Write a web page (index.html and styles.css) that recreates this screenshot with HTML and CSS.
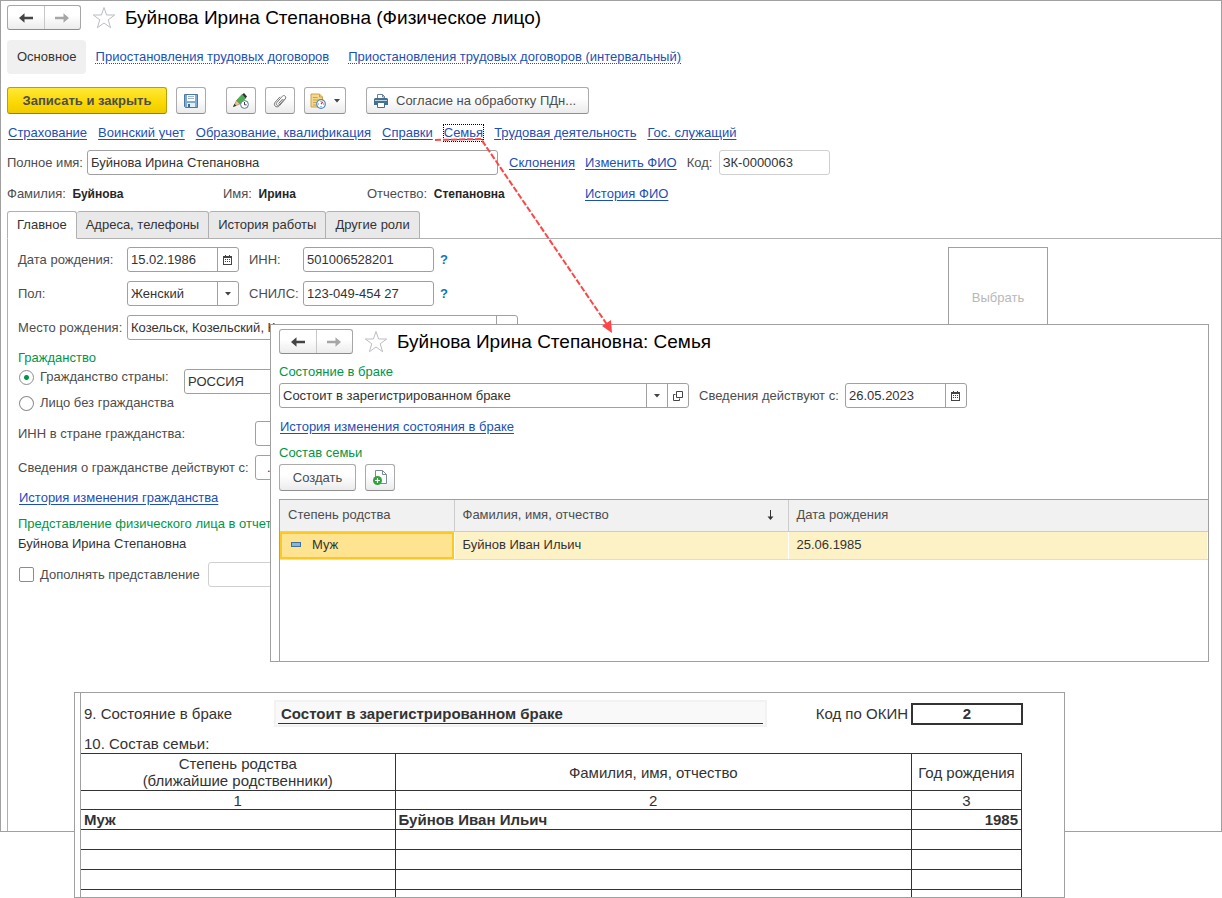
FILE: index.html
```html
<!DOCTYPE html>
<html lang="ru">
<head>
<meta charset="utf-8">
<title>Буйнова Ирина Степановна (Физическое лицо)</title>
<link rel="stylesheet" href="styles.css">
</head>
<body>
<svg class="defs" aria-hidden="true">
  <symbol id="i-back" viewBox="0 0 14 10"><path d="M0 5 5.500 0.300V3.700H14V6.300H5.500V9.700Z" fill="currentColor"/></symbol>
  <symbol id="i-fwd" viewBox="0 0 14 10"><path d="M14 5 8.500 0.300V3.700H0V6.300H8.500V9.700Z" fill="currentColor"/></symbol>
  <symbol id="i-star" viewBox="0 0 24 24"><path d="M12 1.500 14.600 9H22.700L16.200 13.800 18.600 21.700 12 17 5.400 21.700 7.800 13.800 1.300 9H9.400Z" fill="#fff" stroke="#b9bdc4"/></symbol>
  <symbol id="i-cal" viewBox="0 0 10 10"><g shape-rendering="crispEdges"><path d="M0 1H2V0H3V1H6V0H7V1H9V10H0Z" fill="#444"/><path d="M1 3H8V9H1Z" fill="#fff"/><path d="M2 4H3V5H2ZM4 4H5V5H4ZM6 4H7V5H6ZM2 6H3V7H2ZM4 6H5V7H4ZM6 6H7V7H6Z" fill="#444"/></g></symbol>
  <symbol id="i-down" viewBox="0 0 6 4"><path d="M0 0H6L3 3.500Z" fill="#444"/></symbol>
  <symbol id="i-open" viewBox="0 0 10 10"><path d="M3.500 0.500H9.500V6.500H3.500ZM2.500 3.500H0.500V9.500H6.500V7.500" fill="none" stroke="#444"/></symbol>
</svg>

<main class="desktop">
  <section class="window person">
    <header class="titlebar">
      <div class="history">
        <button type="button" aria-label="Назад"><svg><use href="#i-back"/></svg></button>
        <button type="button" class="off" aria-label="Вперед"><svg><use href="#i-fwd"/></svg></button>
      </div>
      <svg class="star"><use href="#i-star"/></svg>
      <h1>Буйнова Ирина Степановна (Физическое лицо)</h1>
    </header>

    <nav class="sections">
      <span class="current">Основное</span>
      <a href="#">Приостановления трудовых договоров</a>
      <a href="#">Приостановления трудовых договоров (интервальный)</a>
    </nav>

    <div class="toolbar">
      <button type="button" class="btn primary">Записать и закрыть</button>
      <button type="button" class="btn icon save" aria-label="Записать">
        <svg viewBox="0 0 16 16"><path d="M1.500 1.500H14.500V14.500H2.500L1.500 13.500Z" fill="#7fabd2" stroke="#4a78a3"/><path d="M4 2H12V8H4Z" fill="#fff"/><path d="M5 3.500H11M5 5.500H11" stroke="#9db6cc"/><path d="M4 10H12V14H4Z" fill="#e3edf5"/><path d="M5 11H7V14H5Z" fill="#3f6c97"/></svg>
      </button>
      <button type="button" class="btn icon" aria-label="Правка">
        <svg viewBox="0 0 16 16"><path d="M9 1.500 11 0 14 3.500 12.500 5.500Z" fill="#333"/><path d="M3.500 7.500 9 1.500 12.500 5.200 7 11Z" fill="#4caf50" stroke="#2f8a3a" stroke-width=".6"/><path d="M3.500 7.500 7 11 0.500 13.500Z" fill="#e8c48c" stroke="#8a6a3a" stroke-width=".5"/><path d="M0 14 1.500 10.800 3.300 12.700Z" fill="#333"/><circle cx="11.500" cy="11.500" r="3.900" fill="#fff" stroke="#56748f"/><path d="M11.500 9V11.800H13.500" fill="none" stroke="#345"/></svg>
      </button>
      <button type="button" class="btn icon" aria-label="Файлы">
        <svg viewBox="0 0 16 16"><path d="M12.500 6 7 12C5.500 13.300 3.300 11.300 4.700 9.700L10.300 3.300C12.100 1.300 15 3.800 13.200 6L7.500 12.700C4.800 15.800 0.600 12.300 3.200 9.200L8 3.800M10.700 6 6.500 10.600" fill="none" stroke="#777"/></svg>
      </button>
      <button type="button" class="btn icon split" aria-label="Отчеты">
        <svg viewBox="0 0 16 16"><path d="M1 1H9.500L12.500 4V14H1Z" fill="#f5d98b" stroke="#c9a24d"/><path d="M9.500 1V4H12.500M3 4.500H7.500M3 7H9M3 9.500H6.500M3 12H6" fill="none" stroke="#c9a24d"/><circle cx="11" cy="11" r="4.300" fill="#fff" stroke="#4b86b8" stroke-width="1.200"/><path d="M11 8V9M11 13V14M8 11H9M13 11H14" stroke="#4b86b8"/><path d="M11 11 12.800 8.800" stroke="#d33" stroke-width="1.200"/></svg>
        <svg class="caret"><use href="#i-down"/></svg>
      </button>
      <button type="button" class="btn print">
        <svg viewBox="0 0 16 16"><path d="M4.500 6V1.500H9.500L11.500 3.500V6" fill="#fff" stroke="#6b8299"/><path d="M9.500 1.500V4H12" fill="none" stroke="#6b8299"/><path d="M2 5H14L15 6V12H1V6Z" fill="#44708f"/><path d="M2 7.500H14" stroke="#bcd0df"/><path d="M4.500 9.500H11.500V14.500H4.500Z" fill="#fff" stroke="#44708f"/></svg>
        Согласие на обработку ПДн...
      </button>
    </div>

    <nav class="links">
      <a href="#">Страхование</a>
      <a href="#">Воинский учет</a>
      <a href="#">Образование, квалификация</a>
      <a href="#">Справки</a>
      <a href="#" class="focus">Семья</a>
      <a href="#">Трудовая деятельность</a>
      <a href="#">Гос. служащий</a>
    </nav>

    <div class="idrow">
      <label for="full">Полное имя:</label>
      <input class="box" id="full" value="Буйнова Ирина Степановна">
      <a href="#">Склонения</a>
      <a href="#">Изменить ФИО</a>
      <label for="code">Код:</label>
      <input class="box pale" id="code" value="ЗК-0000063">
    </div>

    <div class="names">
      <span>Фамилия: <b>Буйнова</b></span>
      <span>Имя: <b>Ирина</b></span>
      <span>Отчество: <b>Степановна</b></span>
      <a href="#">История ФИО</a>
    </div>

    <div class="tabs" role="tablist">
      <button type="button" role="tab" aria-selected="true">Главное</button>
      <button type="button" role="tab">Адреса, телефоны</button>
      <button type="button" role="tab">История работы</button>
      <button type="button" role="tab">Другие роли</button>
    </div>

    <div class="page">
      <div class="details">
        <div class="line">
          <label for="birth">Дата рождения:</label>
          <div class="box combo short"><input id="birth" value="15.02.1986"><button type="button" aria-label="Календарь"><svg class="cal"><use href="#i-cal"/></svg></button></div>
          <label for="inn" class="second">ИНН:</label>
          <input class="box num" id="inn" value="501006528201">
          <a href="#" class="help">?</a>
        </div>
        <div class="line">
          <label for="sex">Пол:</label>
          <div class="box combo short"><select id="sex"><option>Женский</option></select><span class="cell"><svg class="caret"><use href="#i-down"/></svg></span></div>
          <label for="snils" class="second">СНИЛС:</label>
          <input class="box num" id="snils" value="123-049-454 27">
          <a href="#" class="help">?</a>
        </div>
        <div class="line">
          <label for="place">Место рождения:</label>
          <div class="box combo long"><input id="place" value="Козельск, Козельский, К"><button type="button" aria-label="Открыть"></button></div>
        </div>

        <h2>Гражданство</h2>
        <div class="citizen">
          <div class="choices">
            <label><input type="radio" name="cit" checked>Гражданство страны:</label>
            <label><input type="radio" name="cit">Лицо без гражданства</label>
          </div>
          <input class="box" aria-label="Страна" value="РОССИЯ">
        </div>
        <div class="line wide">
          <label for="finn">ИНН в стране гражданства:</label>
          <input class="box" id="finn">
        </div>
        <div class="line wide">
          <label for="since">Сведения о гражданстве действуют с:</label>
          <input class="box" id="since" value=".  .">
        </div>
        <a href="#" class="hist">История изменения гражданства</a>
        <h2>Представление физического лица в отчетах</h2>
        <p class="repr">Буйнова Ирина Степановна</p>
        <div class="extra">
          <label><input type="checkbox">Дополнять представление</label>
          <input class="box pale" aria-label="Дополнение представления">
        </div>
      </div>
      <button type="button" class="photo">Выбрать</button>
    </div>
  </section>

  <section class="window family">
    <header class="titlebar">
      <div class="history">
        <button type="button" aria-label="Назад"><svg><use href="#i-back"/></svg></button>
        <button type="button" class="off" aria-label="Вперед"><svg><use href="#i-fwd"/></svg></button>
      </div>
      <svg class="star"><use href="#i-star"/></svg>
      <h1>Буйнова Ирина Степановна: Семья</h1>
    </header>
    <h2>Состояние в браке</h2>
    <div class="marital">
      <div class="box combo state"><select aria-label="Состояние в браке"><option>Состоит в зарегистрированном браке</option></select><span class="cell"><svg class="caret"><use href="#i-down"/></svg></span><button type="button" aria-label="Открыть"><svg class="cal"><use href="#i-open"/></svg></button></div>
      <label for="valid">Сведения действуют с:</label>
      <div class="box combo valid"><input id="valid" value="26.05.2023"><button type="button" aria-label="Календарь"><svg class="cal"><use href="#i-cal"/></svg></button></div>
    </div>
    <a href="#" class="hist">История изменения состояния в браке</a>
    <h2>Состав семьи</h2>
    <div class="actions">
      <button type="button" class="btn create">Создать</button>
      <button type="button" class="btn icon" aria-label="Скопировать">
        <svg viewBox="0 0 16 16"><path d="M3.500 0.500H10.500L14.500 4.500V13.500H3.500Z" fill="#fff" stroke="#7d8c9c"/><path d="M10.500 0.500V4.500H14.500" fill="none" stroke="#7d8c9c"/><circle cx="5.500" cy="10.500" r="4.500" fill="#2fa33c"/><path d="M5.500 8V13M3 10.500H8" stroke="#fff" stroke-width="1.200"/></svg>
      </button>
    </div>
    <div class="gridwrap">
      <table class="members">
        <colgroup><col class="c1"><col class="c2"><col></colgroup>
        <thead><tr><th>Степень родства</th><th><span class="sorted">Фамилия, имя, отчество<svg viewBox="0 0 8 12"><path d="M4.500 1V9" stroke="#333"/><path d="M1.500 7.500H7.500L4.500 11Z" fill="#333"/></svg></span></th><th>Дата рождения</th></tr></thead>
        <tbody><tr><td class="picked"><i class="mark"></i>Муж</td><td>Буйнов Иван Ильич</td><td>25.06.1985</td></tr></tbody>
      </table>
    </div>
  </section>

  <section class="window report">
    <div class="sheet">
      <div class="item9">
        <span class="caption">9. Состояние в браке</span>
        <div class="status"><b>Состоит в зарегистрированном браке</b></div>
        <span class="okin">Код по ОКИН</span>
        <b class="okinbox">2</b>
      </div>
      <p class="item10">10. Состав семьи:</p>
      <table class="form">
        <colgroup><col class="r1"><col><col class="r3"></colgroup>
        <thead>
          <tr class="head"><th>Степень родства<br>(ближайшие родственники)</th><th>Фамилия, имя, отчество</th><th>Год рождения</th></tr>
          <tr class="nums"><th>1</th><th>2</th><th>3</th></tr>
        </thead>
        <tbody>
          <tr><td>Муж</td><td>Буйнов Иван Ильич</td><td class="year">1985</td></tr>
          <tr><td></td><td></td><td></td></tr>
          <tr><td></td><td></td><td></td></tr>
          <tr><td></td><td></td><td></td></tr>
          <tr><td></td><td></td><td></td></tr>
        </tbody>
      </table>
    </div>
  </section>

  <svg class="pointer" viewBox="0 0 180 196" aria-hidden="true">
    <path d="M0 4 46 3 173 190" fill="none" stroke="#ff4646" stroke-width="2" stroke-dasharray="6 2"/>
    <path d="M167 190 176 184 177 197Z" fill="#ff4646"/>
  </svg>
</main>
</body>
</html>
```
FILE: styles.css
```css
* { box-sizing: border-box; }
body {
  margin: 0;
  background: #fff;
  color: #333;
  font: 13px/16px "Liberation Sans", Arial, sans-serif;
}
h1, h2, p { margin: 0; font-weight: normal; }
h1 { font-size: 19px; line-height: 24px; color: #000; }
h2 { font-size: 13px; color: #009646; }
a { color: #1d4fb5; text-underline-offset: 2px; }
button, input, select { font: inherit; color: inherit; margin: 0; }
label { color: #4d4d4d; }
.defs { position: absolute; width: 0; height: 0; }

.desktop { position: relative; height: 898px; overflow: hidden; }
.window { position: absolute; background: #fff; border: 1px solid #a0a0a0; overflow: hidden; white-space: nowrap; }
.person { left: 0; right: 0; top: 0; height: 832px; padding: 4px 0 0 6px; display: flex; flex-direction: column; }
.family { left: 270px; right: 13px; top: 324px; height: 338px; padding: 4px 0 0 8px; display: flex; flex-direction: column; }
.report { left: 74px; right: 157px; top: 692px; height: 206px; padding-left: 5px; }

/* title bars */
.titlebar { display: flex; align-items: center; height: 25px; }
.history { display: flex; height: 25px; width: 74px; border: 1px solid #a6a6a6; border-bottom-color: #8c8c8c; border-radius: 3px; background: linear-gradient(#fff 40%, #ececec); }
.history button { flex: 1; border: 0; padding: 0; background: none; color: #444; display: flex; align-items: center; justify-content: center; }
.history button + button { border-left: 1px solid #c8c8c8; }
.history .off { color: #a6a6a6; }
.history svg { width: 14px; height: 10px; }
.star { width: 24px; height: 24px; margin: 0 9px 0 11px; }

/* section links */
.sections { display: flex; align-items: center; gap: 19px; margin-top: 10px; height: 34px; }
.sections .current { align-self: stretch; display: flex; align-items: center; padding: 0 9px 0 10px; margin-right: -9px; background: #f0f0f0; border-radius: 4px; }
.sections a { text-decoration: underline dotted 1px; }

/* buttons */
.toolbar { display: flex; gap: 9px; margin-top: 13px; }
.btn { height: 27px; padding: 0 10px; border: 1px solid #ababab; border-bottom-color: #8f8f8f; border-radius: 3px; background: linear-gradient(#fff 40%, #ebebeb); color: #4d4d4d; display: flex; align-items: center; justify-content: center; }
.btn svg { width: 16px; height: 16px; flex: none; }
.btn .caret, .caret { width: 6px; height: 4px; }
.btn.primary { width: 160px; padding: 0; font-weight: bold; border-color: #b8a000 #b8a000 #958200; background: linear-gradient(#ffe838, #fbd800 60%, #efcb00); }
.btn.icon { width: 30px; padding: 0; }
.btn.save { margin-right: 11px; }
.btn.split { width: 42px; gap: 8px; margin-right: 11px; }
.btn.print { width: 223px; gap: 7px; padding: 0 6px; justify-content: flex-start; }

.links { display: flex; gap: 11px; margin: 11px 0 0 1px; }
.links .focus { outline: 1px dotted #000; }

/* fields */
.box { height: 25px; border: 1px solid #a0a0a0; border-radius: 3px; background: #fff; padding: 0 3px; min-width: 0; }
.box.pale { border-color: #d0d0d0; }
.combo { display: flex; padding: 0; }
.combo input, .combo select { flex: 1; min-width: 0; border: 0; padding: 0 3px; background: none; appearance: none; outline: 0; }
.combo button, .cell { width: 21px; flex: none; padding: 0; border: 0; border-left: 1px solid #a0a0a0; background: none; display: flex; align-items: center; justify-content: center; }
.cal { width: 10px; height: 10px; }

.idrow { display: flex; align-items: center; margin-top: 9px; }
.idrow label { width: 80px; }
.idrow #full { width: 411px; margin-right: 11px; }
.idrow a { margin-right: 10px; }
.idrow a + label { width: 32px; }
.idrow #code { width: 111px; }
.names { display: grid; grid-template-columns: 216px 144px 218px auto; align-items: center; margin-top: 11px; color: #4d4d4d; }
.names b { margin-left: 3px; font-size: 12px; color: #262626; }

/* tabs */
.tabs { display: flex; margin-top: 9px; box-shadow: inset 0 -1px #b0b0b0; }
.tabs button { height: 28px; padding: 0 9px; border: 1px solid #b0b0b0; border-radius: 3px 3px 0 0; background: #e9e9e9; }
.tabs button + button { border-left: 0; }
.tabs [aria-selected] { background: #fff; border-bottom-color: #fff; }

.page { flex: 1; display: flex; justify-content: space-between; border-left: 1px solid #b0b0b0; padding: 8px 173px 0 10px; }
.details { display: flex; flex-direction: column; align-items: flex-start; }
.line { display: flex; align-items: center; margin-bottom: 9px; }
.line label { width: 109px; }
.line .short { width: 112px; }
.line .second { width: 54px; margin-left: 10px; }
.line .num { width: 131px; }
.line .long { width: 391px; }
.help { margin-left: 6px; color: #0f75bd; text-decoration: none; font-weight: bold; }
.details h2 { margin-top: 1px; }
.citizen { display: flex; gap: 10px; margin: 3px 0 10px; }
.choices { display: flex; flex-direction: column; gap: 10px; width: 156px; }
.choices label, .extra label { display: flex; align-items: center; gap: 6px; margin-left: 1px; height: 16px; }
.citizen .box { width: 200px; }
.wide label { width: 237px; }
.wide .box { width: 120px; padding-left: 11px; }
.details .hist { margin: 1px 0 9px 1px; }
.repr { margin-top: 4px; }
.extra { display: flex; align-items: center; gap: 8px; margin-top: 10px; }
.extra .box { width: 200px; }
input[type=radio], input[type=checkbox] { appearance: none; width: 15px; height: 15px; border: 1px solid #8c8c8c; border-radius: 2px; background: #fff; }
input[type=radio] { border-radius: 50%; }
input[type=radio]:checked { background: radial-gradient(circle, #009646 2px, #fff 3px); }
.photo { width: 100px; height: 102px; border: 1px solid #a0a0a0; background: #fff; color: #b8b8b8; padding: 0; }

/* family window */
.family h2 { margin-top: 10px; }
.marital { display: flex; align-items: center; margin-top: 3px; }
.marital .state { width: 410px; margin-right: 10px; }
.marital label { width: 146px; }
.marital .valid { width: 122px; }
.family .hist { margin: 11px 0 0 1px; align-self: flex-start; }
.actions { display: flex; gap: 9px; margin-top: 3px; }
.btn.create { width: 77px; }
.gridwrap { flex: 1; margin-top: 8px; border: 1px solid #a0a0a0; border-width: 1px 0 0 1px; }
table { border-collapse: collapse; table-layout: fixed; width: 100%; }
.members .c1 { width: 174px; }
.members .c2 { width: 334px; }
.members th { height: 31px; padding: 0 8px; text-align: left; font-weight: normal; color: #4d4d4d; background: #f1f1f1; border-right: 1px solid #ccc; border-bottom: 1px solid #ccc; }
.members th:last-child { border-right: 0; }
.sorted { display: flex; justify-content: space-between; padding-right: 6px; }
.sorted svg { width: 8px; height: 12px; align-self: center; }
.members td { height: 28px; padding: 0 8px; background: #fdf1c6; border-right: 1px solid #fff; border-bottom: 1px solid #ddd; }
.members .picked { background: #fee391; box-shadow: inset 0 0 0 2px #fbc91f; padding-left: 11px; }
.mark { display: inline-block; width: 10px; height: 5px; margin: 0 11px 3px 0; border: 1px solid #41719a; background: #8bb4d4; vertical-align: middle; }

/* printed form */
.sheet { height: 204px; border-left: 1px solid #a0a0a0; padding: 7px 42px 0 0; font-size: 15px; line-height: 17px; overflow: hidden; }
.item9 { display: flex; align-items: center; height: 27px; padding-left: 3px; }
.caption { width: 190px; }
.status { width: 493px; height: 27px; padding: 1px 2px; border: 2px solid #f2f2f2; background: #f9f9f9; }
.status b { display: block; height: 21px; padding: 2px 3px 0; border-bottom: 1px solid #333; }
.okin { flex: 1; text-align: right; padding-right: 3px; }
.okinbox { width: 112px; height: 22px; border: 2px solid #333; text-align: center; line-height: 18px; margin-right: -1px; }
.item10 { margin: 8px 0 0 3px; }
.form { margin-top: 1px; }
.form .r1 { width: 314px; }
.form .r3 { width: 110px; }
.form th, .form td { border: 1px solid #333; padding: 0 3px; height: 20px; text-align: left; font-weight: bold; }
.form th { text-align: center; font-weight: normal; }
.form .head th { height: 37px; }
.form .nums th { height: 19px; }
.form tr > :first-child { border-left: 0; }
.form .year { text-align: right; }

.pointer { position: absolute; left: 435px; top: 136px; width: 180px; height: 196px; overflow: visible; pointer-events: none; }
```
